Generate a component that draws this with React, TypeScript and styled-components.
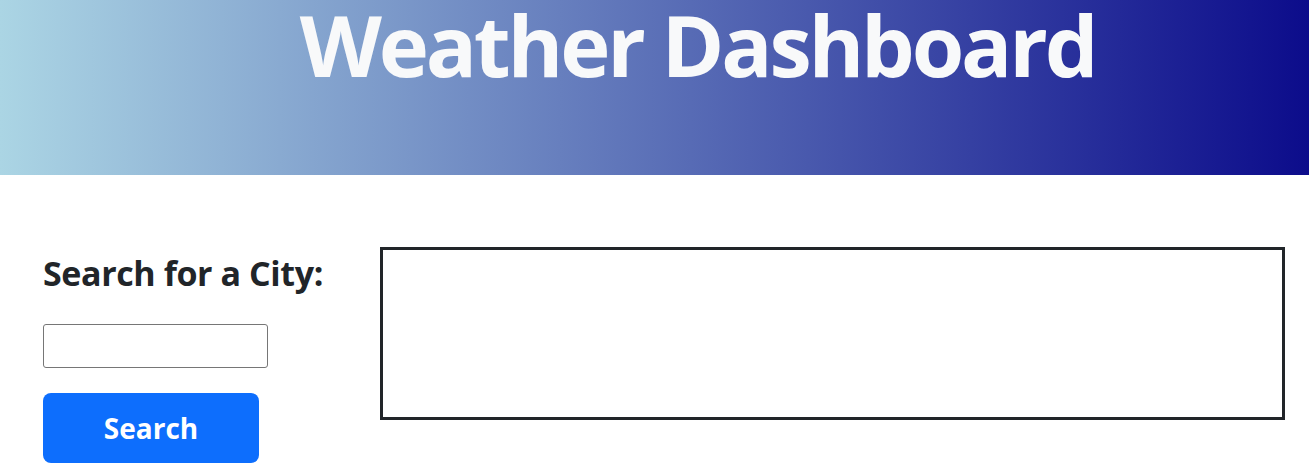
import React from "react";
import styled, { createGlobalStyle } from "styled-components";

const Global = createGlobalStyle`
  html, body { margin: 0; padding: 0; background: #fff; }
  body { font-family: "Open Sans", "Noto Sans", sans-serif; color: #212529; }
  * { box-sizing: border-box; }
`;

const Header = styled.header`
  height: 175px;
  background: linear-gradient(to right, #abd5e4, #0c0c8b);
  display: flex;
  justify-content: center;
  align-items: flex-start;
  padding-left: 86px;
  padding-top: 2px;
`;

const Title = styled.h1`
  margin: 0;
  font-size: 85px;
  line-height: 1;
  font-weight: 700;
  color: #f8f9fa;
  letter-spacing: -3.2px;
`;

const Main = styled.main`
  display: flex;
  padding: 72px 24px 0 43px;
`;

const Sidebar = styled.section`
  width: 337px;
  flex-shrink: 0;
  display: flex;
  flex-direction: column;
  align-items: flex-start;
`;

const Label = styled.h3`
  margin: 6px 0 0;
  font-size: 34px;
  line-height: 1.2;
  font-weight: 700;
  color: #212529;
  letter-spacing: -0.4px;
`;

const CityInput = styled.input`
  margin-top: 30px;
  width: 225px;
  height: 44px;
  border: 1px solid #767676;
  border-radius: 3px;
  padding: 4px 8px;
  font-size: 16px;
`;

const SearchButton = styled.button`
  margin-top: 25px;
  width: 216px;
  height: 70px;
  border: none;
  border-radius: 8px;
  background: #0d6efd;
  color: #fff;
  font-family: inherit;
  font-size: 28px;
  font-weight: 700;
  cursor: pointer;
`;

const Results = styled.section`
  flex: 1;
  height: 173px;
  border: 3px solid #212529;
`;

export default function App() {
  return (
    <>
      <Global />
      <Header>
        <Title>Weather Dashboard</Title>
      </Header>
      <Main>
        <Sidebar>
          <Label>Search for a City:</Label>
          <CityInput type="text" />
          <SearchButton>Search</SearchButton>
        </Sidebar>
        <Results />
      </Main>
    </>
  );
}
